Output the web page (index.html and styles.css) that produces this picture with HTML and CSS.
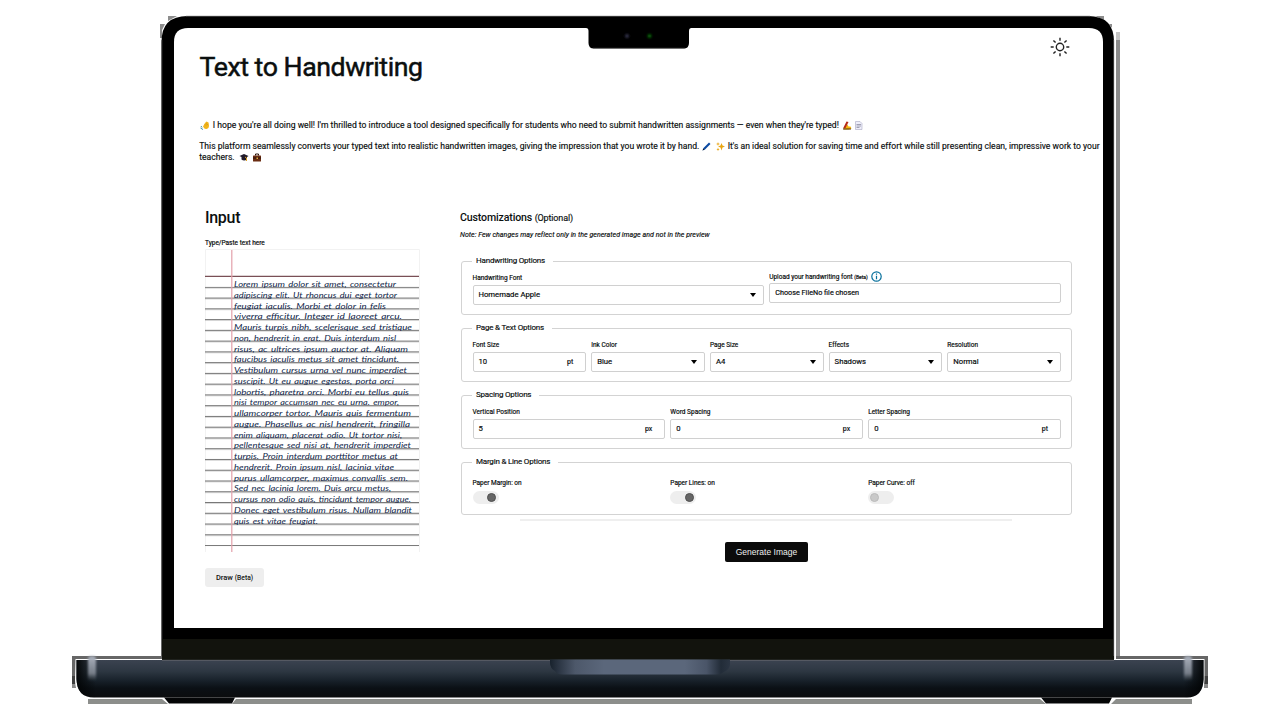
FILE: index.html
```html
<!DOCTYPE html>
<html lang="en">
<head>
<meta charset="utf-8">
<title>Text to Handwriting</title>
<link rel="stylesheet" href="styles.css">
</head>
<body>
<svg class="laptop" width="1280" height="720" viewBox="0 0 1280 720" aria-hidden="true">
  <defs>
    <linearGradient id="base" x1="0" y1="0" x2="0" y2="1">
      <stop offset="0" stop-color="#3b4350"/><stop offset=".3" stop-color="#2d3742"/><stop offset=".55" stop-color="#18212a"/><stop offset=".75" stop-color="#0b1015"/><stop offset="1" stop-color="#0b0c0e"/>
    </linearGradient>
    <linearGradient id="lip" x1="0" y1="0" x2="1" y2="0">
      <stop offset="0" stop-color="#18222d"/><stop offset=".05" stop-color="#2c3644"/><stop offset=".14" stop-color="#4d586a"/><stop offset=".3" stop-color="#5b677b"/><stop offset=".75" stop-color="#5b677b"/><stop offset=".87" stop-color="#4a5568"/><stop offset=".95" stop-color="#222c38"/><stop offset="1" stop-color="#2b3543"/>
    </linearGradient>
    <linearGradient id="side" x1="0" y1="0" x2="1" y2="0">
      <stop offset="0" stop-color="#020405" stop-opacity=".95"/><stop offset="1" stop-color="#020405" stop-opacity="0"/>
    </linearGradient>
    <linearGradient id="shine" x1="0" y1="0" x2="0" y2="1">
      <stop offset="0" stop-color="#aab1bd"/><stop offset=".7" stop-color="#8b929d" stop-opacity=".8"/><stop offset="1" stop-color="#606872" stop-opacity="0"/>
    </linearGradient>
    <linearGradient id="foot" x1="0" y1="0" x2="1" y2="0">
      <stop offset="0" stop-color="#030405"/><stop offset=".5" stop-color="#20242a"/><stop offset="1" stop-color="#030405"/>
    </linearGradient>
    <filter id="soft" x="-50%" y="-20%" width="200%" height="140%"><feGaussianBlur stdDeviation="1.3"/></filter>
    <filter id="dot" x="-50%" y="-50%" width="200%" height="200%"><feGaussianBlur stdDeviation=".8"/></filter>
  </defs>
  <path d="M160 24h5l-3 6v8h-2zM168 16h9l-9 5zM1095 16h9v4zM1109 24h3v4z" fill="#8d8d8d"/>
  <rect x="1116" y="32" width="4" height="8" fill="#c4c4c4"/>
  <rect x="1116" y="40" width="4" height="617" fill="#8b8b8b"/>
  <path d="M72 656h89v3H76v29h-4zM1116 656h92v32h-4v-29h-88z" fill="#666"/>
  <path d="M72 676h4v12h-4zM1204 676h4v12h-4z" fill="#3f3f3f"/>
  <path d="M72 684h4v4h-4zM1204 684h4v4h-4z" fill="#8a8a8a"/>
  <rect x="88" y="699" width="1104" height="5" fill="#8c8e8b"/>
  <path d="M161.500 660V42Q161.500 16 187.500 16H1088Q1114 16 1114 42V660Z"/>
  <path d="M186 16.300H1090M161.800 40V660M1113.700 40V660" stroke="#555" stroke-width=".8" fill="none"/>
  <rect x="162" y="639" width="951" height="21" fill="#12130d"/>
  <path d="M174 628V42Q174 28 188 28H1089Q1103 28 1103 42V628Z" fill="#fff"/>
  <path d="M586 28Q588.500 28 588.500 31V43Q588.500 48.500 594 48.500H683.500Q689 48.500 689 43V31Q689 28 691.500 28Z"/>
  <path d="M593 48.300H685" stroke="#666" stroke-width=".7"/>
  <circle cx="627" cy="36" r="2" fill="#34344e" filter="url(#dot)"/>
  <circle cx="649.500" cy="36" r="2" fill="#086808" filter="url(#dot)"/>
  <path d="M75.500 659H1204.500V680Q1204 699 1188 699H1116L1111 704H1046L1040 699H236L232 704H168L162 699H92Q75 698 75 680Z" fill="#fff"/>
  <path d="M76.500 660H1203.500V679Q1203 697.500 1187 697.500H94Q77 697.500 76.500 679Z" fill="url(#base)"/>
  <path d="M162 656H1114V660H162Z" fill="#12130d"/>
  <path d="M162 660.300H1114" stroke="#5d5f67" stroke-width="1"/>
  <path d="M76.500 660H96V697.500H94Q77 697.500 76.500 679Z" fill="url(#side)"/>
  <path d="M76.500 660H96V697.500H94Q77 697.500 76.500 679Z" fill="url(#side)" transform="translate(1280 0) scale(-1 1)"/>
  <rect x="88" y="656" width="8" height="25" rx="3" fill="url(#shine)" filter="url(#soft)"/>
  <rect x="1184" y="656" width="8" height="25" rx="3" fill="url(#shine)" filter="url(#soft)"/>
  <path d="M164 697.500H235L232 703.500H169ZM1041 697.500H1112L1109 703.500H1046Z" fill="url(#foot)"/>
  <path d="M550 659.500H730V665Q729 670 724 672Q721 674.500 716 674.500H563Q557 674.500 555 671Q550 668 550 663Z" fill="url(#lip)"/>
</svg>

<main class="page">
  <header class="header">
    <h1 class="title">Text to Handwriting</h1>
    <svg class="sun" width="20" height="20" viewBox="0 0 20 20" fill="none" stroke="#222" stroke-width="1.400"><circle cx="10" cy="10" r="3.700"/><path d="M10 .7v3M10 16.300v3M.7 10h3M16.300 10h3M3.400 3.400l2.200 2.200M14.400 14.400l2.200 2.200M3.400 16.600l2.200-2.200M14.400 5.600l2.200-2.200"/></svg>
  </header>

  <section class="intro">
    <p class="para"><span class="line line-a"><svg class="emoji wave" width="10" height="9" viewBox="0 0 18 18"><path d="M5 11L9 4l3-3 4 2 1 6q0 6-5 7-4 1-7-5z" fill="#f2b51d"/><path d="M9 7l2 2M12 5l2 3" stroke="#a87408"/><path d="M0 14l5 3M1 10l2 3" stroke="#3f8fac" stroke-width="2"/></svg> I hope you're all doing well! I'm thrilled to introduce a tool designed specifically for students who need to submit handwritten assignments — even when they're typed! <svg class="emoji" width="10" height="9" viewBox="0 0 18 18"><path d="M3 13L10 7l2 4h4l2 4-6 2H3z" fill="#f5b50f"/><path d="M1 15L8 1l4 1-6 12z" fill="#b62a18"/><path d="M1 16h16" stroke="#51350b" stroke-width="2"/></svg><svg class="emoji sheet" width="9" height="9" viewBox="0 0 18 18"><path d="M3 1h9l4 4v12H3z" fill="#eeeefa" stroke="#9b9bb8"/><path d="M5 7h9M5 10h9M5 13h6" stroke="#54546f"/></svg></span></p>
    <p class="para"><span class="line line-b">This platform seamlessly converts your typed text into realistic handwritten images, giving the impression that you wrote it by hand. <svg class="emoji" width="9" height="9" viewBox="0 0 18 18"><path d="M1 17L3 12 14 1l3 3L6 15z" fill="#0c4aa2"/><path d="M1 17l2-4 2 2z" fill="#111"/></svg> <svg class="emoji" width="9" height="9" viewBox="0 0 18 18"><path d="M11 2l2 5 5 2-5 2-2 6-2-6-5-2 5-2zM4 0l1 3 3 1-3 1-1 3-1-3-3-1 3-1zM4 11l1 3 2 1-2 1-1 2-1-2-2-1 2-1z" fill="#eaa612"/></svg> It's an ideal solution for saving time and effort while still presenting clean, impressive work to your</span>
    <span class="line line-c">teachers. <svg class="emoji cap" width="10" height="9" viewBox="0 0 18 18"><path d="M0 6l9-4 9 4-3 2v5q-6 4-11 0V8z" fill="#201a2a"/><path d="M11 8l3 2v6" stroke="#e0a222" stroke-width="2" fill="none"/></svg><svg class="emoji case" width="10" height="9" viewBox="0 0 18 18"><path d="M6 5V2h6v3" fill="none" stroke="#2b1208" stroke-width="2"/><rect x="1" y="5" width="16" height="12" rx="1" fill="#6b2d13"/><path d="M1 10h16" stroke="#2b1208" stroke-width="2"/><rect x="8" y="9" width="3" height="3" fill="#e1a93b"/></svg></span></p>
  </section>

  <div class="columns">
    <section class="input">
      <h2 class="heading">Input</h2>
      <div class="label paste">Type/Paste text here</div>
      <svg class="paper" width="215" height="304" viewBox="0 0 215 304">
        <defs><pattern id="rules" width="215" height="10.760" patternUnits="userSpaceOnUse" y="37.800"><rect width="215" height="1.250" fill="#777"/></pattern></defs>
        <path d="M.5 303V.5H214.500V303" fill="none" stroke="#f2f2f2"/>
        <rect y="37.600" width="214" height="259.500" fill="url(#rules)"/>
        <path d="M0 27.300H214" stroke="#794f56" stroke-width="1.300"/>
        <path d="M26.800 1V303" stroke="#e3a0aa" stroke-width="1.200"/>
        <g class="script">
          <text x="29" y="38" textLength="162" lengthAdjust="spacingAndGlyphs">Lorem ipsum dolor sit amet, consectetur</text>
          <text x="29" y="48.700" textLength="163" lengthAdjust="spacingAndGlyphs">adipiscing elit. Ut rhoncus dui eget tortor</text>
          <text x="29" y="59.500" textLength="152" lengthAdjust="spacingAndGlyphs">feugiat iaculis. Morbi et dolor in felis</text>
          <text x="29" y="70.200" textLength="168" lengthAdjust="spacingAndGlyphs">viverra efficitur. Integer id laoreet arcu.</text>
          <text x="29" y="81" textLength="178" lengthAdjust="spacingAndGlyphs">Mauris turpis nibh, scelerisque sed tristique</text>
          <text x="29" y="91.700" textLength="162" lengthAdjust="spacingAndGlyphs">non, hendrerit in erat. Duis interdum nisl</text>
          <text x="29" y="102.500" textLength="174" lengthAdjust="spacingAndGlyphs">risus, ac ultrices ipsum auctor at. Aliquam</text>
          <text x="29" y="113.200" textLength="165" lengthAdjust="spacingAndGlyphs">faucibus iaculis metus sit amet tincidunt.</text>
          <text x="29" y="124" textLength="173" lengthAdjust="spacingAndGlyphs">Vestibulum cursus urna vel nunc imperdiet</text>
          <text x="29" y="134.700" textLength="160" lengthAdjust="spacingAndGlyphs">suscipit. Ut eu augue egestas, porta orci</text>
          <text x="29" y="145.500" textLength="175" lengthAdjust="spacingAndGlyphs">lobortis, pharetra orci. Morbi eu tellus quis</text>
          <text x="29" y="156.200" textLength="165" lengthAdjust="spacingAndGlyphs">nisi tempor accumsan nec eu urna. empor,</text>
          <text x="29" y="167" textLength="177" lengthAdjust="spacingAndGlyphs">ullamcorper tortor. Mauris quis fermentum</text>
          <text x="29" y="177.700" textLength="176" lengthAdjust="spacingAndGlyphs">augue. Phasellus ac nisl hendrerit, fringilla</text>
          <text x="29" y="188.500" textLength="168" lengthAdjust="spacingAndGlyphs">enim aliquam, placerat odio. Ut tortor nisi,</text>
          <text x="29" y="199.200" textLength="177" lengthAdjust="spacingAndGlyphs">pellentesque sed nisi at, hendrerit imperdiet</text>
          <text x="29" y="210" textLength="164" lengthAdjust="spacingAndGlyphs">turpis. Proin interdum porttitor metus at</text>
          <text x="29" y="220.700" textLength="160" lengthAdjust="spacingAndGlyphs">hendrerit. Proin ipsum nisl, lacinia vitae</text>
          <text x="29" y="231.500" textLength="174" lengthAdjust="spacingAndGlyphs">purus ullamcorper, maximus convallis sem.</text>
          <text x="29" y="242.200" textLength="157" lengthAdjust="spacingAndGlyphs">Sed nec lacinia lorem. Duis arcu metus,</text>
          <text x="29" y="253" textLength="177" lengthAdjust="spacingAndGlyphs">cursus non odio quis, tincidunt tempor augue.</text>
          <text x="29" y="263.700" textLength="178" lengthAdjust="spacingAndGlyphs">Donec eget vestibulum risus. Nullam blandit</text>
          <text x="29" y="274.500" textLength="84" lengthAdjust="spacingAndGlyphs">quis est vitae feugiat.</text>
        </g>
      </svg>
      <button class="draw">Draw <small>(Beta)</small></button>
    </section>

    <section class="custom">
      <h2 class="subheading">Customizations <span class="optional">(Optional)</span></h2>
      <p class="note">Note: Few changes may reflect only in the generated image and not in the preview</p>

      <div class="group two">
        <span class="legend">Handwriting Options</span>
        <div class="field"><span class="label">Handwriting Font</span><div class="box"><span>Homemade Apple</span><i class="caret"></i></div></div>
        <div class="field upload"><span class="label">Upload your handwriting font <small>(Beta)</small><svg class="info" width="11" height="11" viewBox="0 0 11 11" fill="none" stroke="#08709c" stroke-width="1.200"><circle cx="5.500" cy="5.500" r="4.700"/><path d="M5.500 4.700v3.500M5.500 2.500v1.200"/></svg></span><div class="box file"><span>Choose FileNo file chosen</span></div></div>
      </div>

      <div class="group five">
        <span class="legend">Page &amp; Text Options</span>
        <div class="field"><span class="label">Font Size</span><div class="box"><span>10</span><span class="unit">pt</span></div></div>
        <div class="field"><span class="label">Ink Color</span><div class="box"><span>Blue</span><i class="caret"></i></div></div>
        <div class="field"><span class="label">Page Size</span><div class="box"><span>A4</span><i class="caret"></i></div></div>
        <div class="field"><span class="label">Effects</span><div class="box"><span>Shadows</span><i class="caret"></i></div></div>
        <div class="field"><span class="label">Resolution</span><div class="box"><span>Normal</span><i class="caret"></i></div></div>
      </div>

      <div class="group three">
        <span class="legend">Spacing Options</span>
        <div class="field"><span class="label">Vertical Position</span><div class="box"><span>5</span><span class="unit">px</span></div></div>
        <div class="field"><span class="label">Word Spacing</span><div class="box"><span>0</span><span class="unit">px</span></div></div>
        <div class="field"><span class="label">Letter Spacing</span><div class="box"><span>0</span><span class="unit">pt</span></div></div>
      </div>

      <div class="group three toggles">
        <span class="legend">Margin &amp; Line Options</span>
        <div class="field"><span class="label">Paper Margin: on</span><div class="toggle on"><i class="knob"></i></div></div>
        <div class="field"><span class="label">Paper Lines: on</span><div class="toggle on"><i class="knob"></i></div></div>
        <div class="field"><span class="label">Paper Curve: off</span><div class="toggle"><i class="knob"></i></div></div>
      </div>

      <div class="divider"></div>
      <button class="generate">Generate Image</button>
    </section>
  </div>
</main>
</body>
</html>
```
FILE: styles.css
```css
* { box-sizing: border-box; }
body { margin: 0; width: 1280px; height: 720px; overflow: hidden; background: #fff; font-family: Roboto, "Liberation Sans", sans-serif; color: #0b0f0f; }
.laptop { position: absolute; left: 0; top: 0; }
.page { position: relative; margin: 28px 0 0 174px; width: 929px; height: 600px; }
.header { display: flex; justify-content: space-between; height: 86px; padding: 9px 33px 0 25.500px; }
.title { margin: 14px 0 0; font-size: 26.700px; letter-spacing: -.45px; line-height: 32px; font-weight: 400; -webkit-text-stroke: .5px #0b0f0f; white-space: nowrap; }
.sun { display: block; }
.intro { height: 87px; padding: 6px 0 0 25.200px; font-size: 8.600px; line-height: 11px; -webkit-text-stroke: .15px #0b0f0f; }
.para { margin: 0 0 10px; }
.line { display: block; height: 11px; white-space: nowrap; }
.emoji { vertical-align: -1.500px; margin: 0 1px; }
.wave { margin-left: .5px; }
.sheet { margin-left: 1px; }
.cap { margin-left: 2px; }
.case { margin-left: 2px; }
.columns { display: flex; padding-left: 31px; }
.input { width: 255px; }
.heading { margin: 7px 0 0; height: 20px; line-height: 20px; font-size: 16px; letter-spacing: -.3px; font-weight: 500; }
.label { display: block; font-size: 6.500px; line-height: 9px; height: 9px; white-space: nowrap; -webkit-text-stroke: .18px #0b0f0f; }
.paste { margin-top: 10.500px; }
.paper { display: block; margin-top: 1px; }
.script { font: italic 8.300px "Homemade Apple", Lato, "Liberation Sans", sans-serif; fill: #101f4a; word-spacing: 1px; }
.draw { display: block; margin-top: 15px; width: 59px; height: 19px; padding: 0; border: 0; border-radius: 3px; background: #eee; font: 500 7.500px Roboto, sans-serif; color: #111; }
.draw small { font-size: 6.700px; }
.custom { width: 612px; padding-top: 8.500px; }
.subheading { margin: 0; font-size: 10.600px; line-height: 15px; font-weight: 500; letter-spacing: -.15px; }
.optional { font-size: 9px; font-weight: 400; -webkit-text-stroke: .15px #0b0f0f; }
.note { margin: 4px 0 21px; font-size: 7px; letter-spacing: .045px; line-height: 10px; font-style: italic; -webkit-text-stroke: .15px #0b0f0f; }
.group { position: relative; display: grid; column-gap: 5px; margin: 0 0 13px 1px; height: 54px; width: 611px; padding: 12px 10px 0 10.500px; border: 1px solid #d3d3d3; border-radius: 3px; }
.legend { position: absolute; left: 10px; top: -7px; padding: 0 8px 0 4px; background: #fff; font-size: 8px; letter-spacing: -.2px; line-height: 12px; white-space: nowrap; -webkit-text-stroke: .15px #0b0f0f; }
.two { grid-template-columns: repeat(2, 1fr); }
.five { grid-template-columns: repeat(5, 1fr); }
.three { grid-template-columns: repeat(3, 1fr); }
.box { display: flex; align-items: center; justify-content: space-between; height: 20.500px; margin-top: 2px; padding: 0 7px 0 5px; border: 1px solid #d0d0d0; border-radius: 2px; font-size: 7.700px; white-space: nowrap; -webkit-text-stroke: .18px #0b0f0f; }
.upload { margin-top: -2px; }
.label small { font-size: 5px; }
.info { margin: -1px 0 0 3px; vertical-align: -3px; }
.file { font-size: 7.250px; }
.unit { margin-right: 5px; font-size: 7px; }
.caret { width: 0; height: 0; border: 3px solid transparent; border-top: 4px solid #000; border-bottom: 0; }
.toggles { height: 53px; margin-bottom: 4.500px; padding-top: 16.500px; }
.toggle { display: flex; align-items: center; width: 26px; height: 13px; margin-top: 3px; padding: 0 2px; border-radius: 7px; background: #eee; }
.on { justify-content: flex-end; }
.knob { width: 9px; height: 9px; border-radius: 50%; background: #c9c9c9; border: 1px solid #bbb; }
.on .knob { background: #666; border-color: #505050; margin-right: .5px; }
.divider { width: 492px; height: 2px; margin: 0 auto 20.500px; background: #efefef; }
.generate { display: block; margin: 0 auto 0 264.700px; width: 83.500px; height: 20.500px; padding: 0; border: 0; border-radius: 2px; background: #0b0b0b; color: #eee; font: 8.500px "Liberation Sans", sans-serif; }
```
